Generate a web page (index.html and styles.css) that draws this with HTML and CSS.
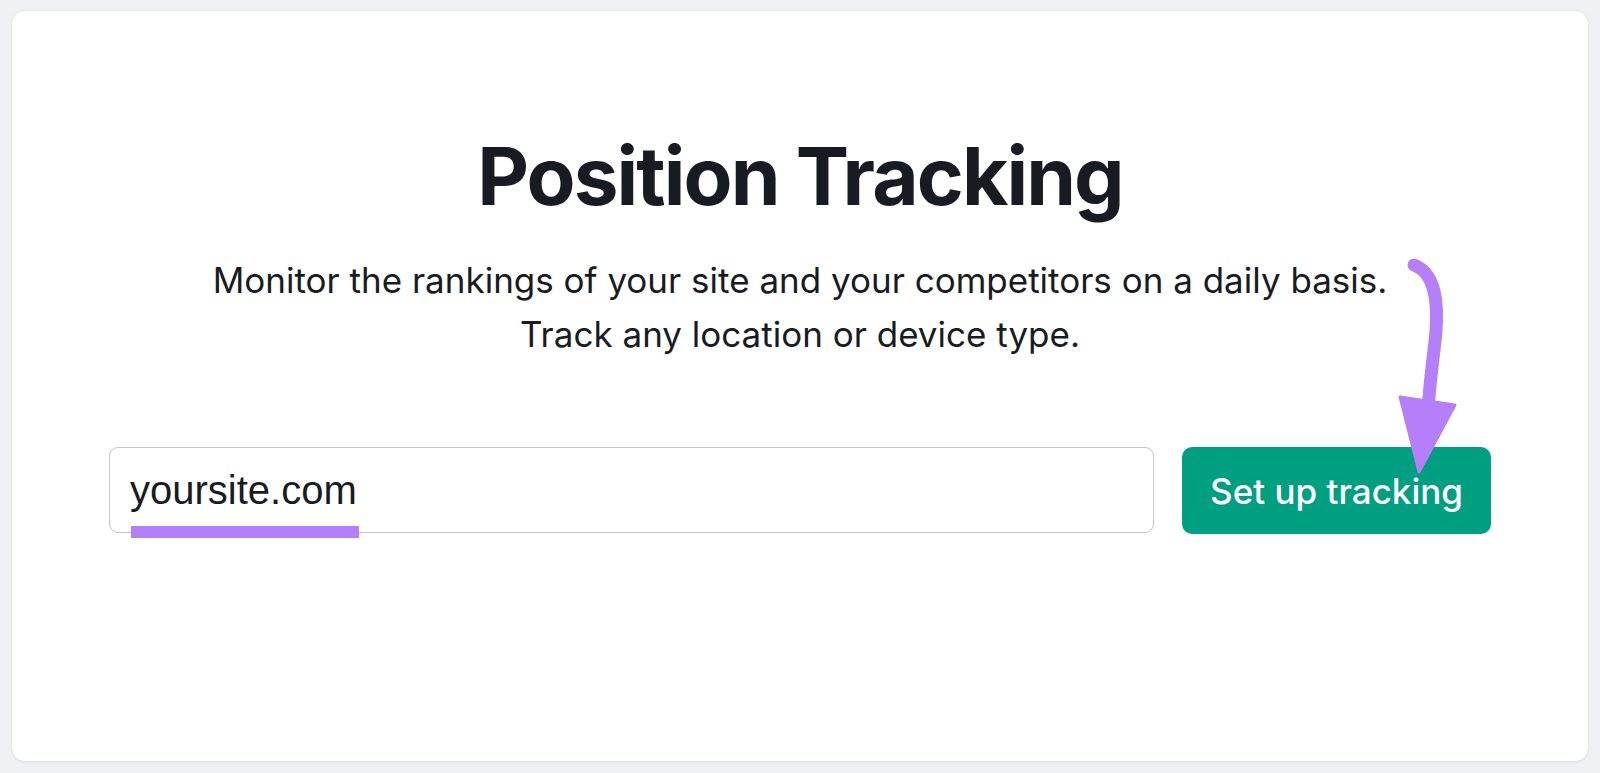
FILE: index.html
```html
<!DOCTYPE html>
<html lang="en">
<head>
<meta charset="utf-8">
<title>Position Tracking</title>
<link rel="stylesheet" href="styles.css">
</head>
<body>
<main class="card">
  <h1 class="title">Position Tracking</h1>
  <p class="subtitle">Monitor the rankings of your site and your competitors on a daily basis.<br>Track any location or device type.</p>
  <form class="row">
    <div class="field">
      <input class="input" type="text" value="yoursite.com">
      <span class="mark"></span>
    </div>
    <button class="btn" type="button">Set up tracking</button>
  </form>
  <svg class="arrow" width="80" height="230" viewBox="1380 255 80 230" aria-hidden="true">
    <path d="M1413 265 C1440 275 1437 320 1433 350 C1430 375 1428 395 1427 410" fill="none" stroke="#b57ffa" stroke-width="13" stroke-linecap="round"/>
    <polygon points="1399,397 1454,405 1418,472" fill="#b57ffa" stroke="#b57ffa" stroke-width="3" stroke-linejoin="round"/>
  </svg>
</main>
</body>
</html>
```

FILE: styles.css
```css
html, body {
  margin: 0;
  padding: 0;
  background: #f0f1f5;
}
body {
  padding: 10px 11px 11px 11px;
  height: 773px;
  box-sizing: border-box;
  font-family: Inter, "Noto Sans", sans-serif;
  color: #191b23;
}
.card {
  position: relative;
  height: 752px;
  box-sizing: border-box;
  background: #ffffff;
  border: 1px solid #e6e7ec;
  border-radius: 14px;
  box-shadow: 0 1px 2px rgba(25, 27, 35, 0.06);
  display: flex;
  flex-direction: column;
  align-items: center;
  padding-top: 117px;
}
.title {
  margin: 0;
  font-family: Inter, sans-serif;
  font-weight: 700;
  font-size: 80px;
  line-height: 96px;
  letter-spacing: -1.9px;
  color: #191b23;
}
.subtitle {
  margin: 29px 0 0 0;
  font-size: 35px;
  line-height: 54px;
  text-align: center;
  color: #191b23;
}
.row {
  margin: 86px 0 0 0;
  display: flex;
  gap: 28px;
  width: 1382px;
}
.field {
  position: relative;
  width: 1045px;
  height: 86px;
}
.input {
  box-sizing: border-box;
  width: 100%;
  height: 100%;
  border: 1.5px solid #c4c6cd;
  border-radius: 9px;
  padding: 0 0 0 20px;
  font-family: "Liberation Sans", Arial, sans-serif;
  font-size: 40px;
  color: #191b23;
  background: #ffffff;
  outline: none;
}
.mark {
  position: absolute;
  left: 22px;
  top: 79px;
  width: 228px;
  height: 12px;
  background: #b57ffa;
}
.btn {
  width: 309px;
  height: 87px;
  border: none;
  border-radius: 10px;
  background: #009f81;
  color: #ffffff;
  font-family: Inter, sans-serif;
  font-weight: 500;
  font-size: 35px;
  cursor: pointer;
}
.arrow {
  position: absolute;
  left: 1369px;
  top: 244px;
}
```
